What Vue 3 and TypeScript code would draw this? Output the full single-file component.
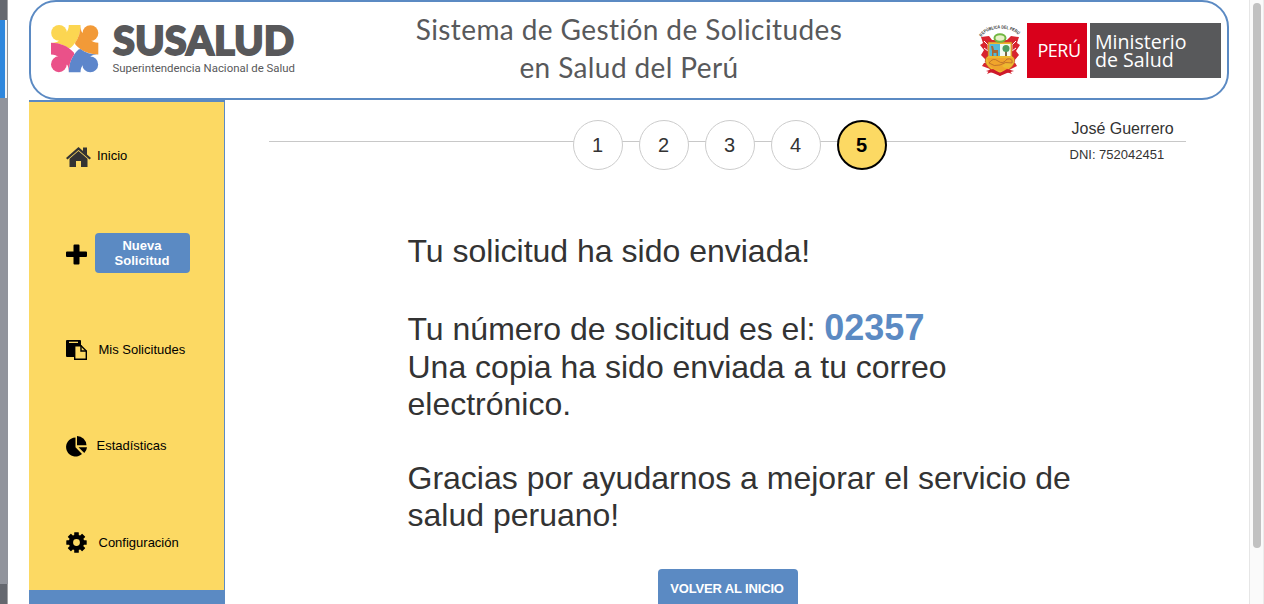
<script setup lang="ts">
interface NavItem {
  label: string
  icon: 'home' | 'plus' | 'paste' | 'pie' | 'gear'
  primary?: boolean
}

const navItems: NavItem[] = [
  { label: 'Inicio', icon: 'home' },
  { label: 'Nueva Solicitud', icon: 'plus', primary: true },
  { label: 'Mis Solicitudes', icon: 'paste' },
  { label: 'Estadísticas', icon: 'pie' },
  { label: 'Configuración', icon: 'gear' },
]

const steps: number[] = [1, 2, 3, 4, 5]
const currentStep = 5

const petals = [
  { color: '#fcd651', angle: 0 },
  { color: '#f29a38', angle: 90 },
  { color: '#5d86cb', angle: 180 },
  { color: '#ea5189', angle: 270 },
]
const gearTeeth = [0, 45, 90, 135, 180, 225, 270, 315]
</script>

<template>
  <div class="screen">
    <div class="edge">
      <div class="edge-dark"></div>
      <div class="edge-blue"></div>
      <div class="edge-gray"></div>
      <div class="edge-dark"></div>
    </div>

    <div class="page">
      <header class="header">
        <svg class="susalud" width="250" height="70" viewBox="0 0 250 70">
          <g transform="translate(0 4) scale(.3355)">
            <g v-for="p in petals" :key="p.angle" :fill="p.color" :transform="`rotate(${p.angle} 70.5 70.5)`">
              <circle cx="24" cy="23.500" r="23.500" />
              <path d="M53 0H88C88 28 78 50 59 68L53.700 69.500C38.600 58.600 21 53 0 53C14 53 24 50 24 44L44 24C50 18 53 10 53 0Z" />
            </g>
          </g>
          <text class="brand" x="62" y="34" textLength="181" lengthAdjust="spacingAndGlyphs">SUSALUD</text>
          <text class="brand-sub" x="61.5" y="51.300" textLength="182.500" lengthAdjust="spacingAndGlyphs">Superintendencia Nacional de Salud</text>
        </svg>

        <h1 class="title"><span class="t1">Sistema de Gestión de Solicitudes</span><br><span class="t2">en Salud del Perú</span></h1>

        <div class="gov">
          <svg width="52" height="60" viewBox="0 0 52 60">
            <path id="arc" d="M7.5 17C13 6.500 37 5 45 16" fill="none" />
            <text class="arc-text"><textPath href="#arc" textLength="41" lengthAdjust="spacingAndGlyphs">REPÚBLICA DEL PERÚ</textPath></text>
            <path d="M7 17L15 16L18 20H33L37 16L45 17L43 23L46 25L42 31L45 35L40 41L43 46L35 50L38 54L30 51L26 56L20 51L13 54L16 49L8 46L12 40L7 35L10 30L6 25L9 23Z" fill="#d8242f" />
            <path d="M10 21L14 25V31L10 28M42 21L38 25V31L42 28" fill="none" stroke="#fff" stroke-width="1" />
            <path d="M8 43L14 41V43ZM43 43L38 41V43Z" fill="#fff" />
            <path d="M14 22H38V36Q42 38 40 44Q36 51 26 53Q16 51 12 44Q10 38 14 36Z" fill="#ecba31" stroke="#c25427" stroke-width=".7" />
            <path d="M15.500 24H26V36H15.500Z" fill="#54b9d9" />
            <path d="M26 24H36.500V36H26Z" fill="#f3faf0" />
            <path d="M18 36V31L17 26H19L20 30H24V36H22.500V33H19.500V36Z" fill="#a96734" />
            <path d="M31 29V36H33V29" fill="#7a6843" />
            <circle cx="32" cy="28.500" r="3.500" fill="#4c9c61" />
            <ellipse cx="26" cy="18" rx="5.500" ry="3.800" fill="#e7f1c8" stroke="#72b742" stroke-width="2" />
            <path d="M13 38H39V43Q32 42 28 46Q32 50 37 46Q31 53 22 50Q14 47 14 41Z" fill="#f0a52b" />
            <path d="M15 43Q19 37 24 41T33 39Q39 38 38 43Q31 41 26 45Q20 47 15 43" fill="none" stroke="#b5682a" stroke-width=".8" />
            <path d="M12 51L19 49L26 53L33 49L40 51L33 53L26 56L19 53Z" fill="#ce1a2b" />
          </svg>
          <div class="peru">PERÚ</div>
          <div class="ministry">Ministerio<br>de Salud</div>
        </div>
      </header>

      <div class="body">
        <aside class="sidebar">
          <nav class="nav">
            <a v-for="item in navItems" :key="item.label" class="nav-item" :class="item.icon">
              <svg v-if="item.icon === 'home'" class="icon" width="25" height="21" viewBox="0 0 25 21">
                <path d="M0 11L12.500 0L17 4V.500H21V7.500L25 11L23.500 12.500L12.500 3L1.500 12.500Z" fill="#333" />
                <path d="M3.500 11.800L12.500 4L21.500 11.800V20H15V14H10V20H3.500Z" fill="#333" />
              </svg>
              <svg v-else-if="item.icon === 'plus'" class="icon" width="21" height="21" viewBox="0 0 21 21">
                <path d="M8.500 .5H12.500Q13.500 .5 13.500 1.500V7.500H20Q21 7.500 21 8.500V12Q21 13 20 13H13.500V19.500Q13.500 20.500 12.500 20.500H8.500Q7.500 20.500 7.500 19.500V13H1Q0 13 0 12V8.500Q0 7.500 1 7.500H7.500V1.500Q7.500 .5 8.500 .5Z" />
              </svg>
              <svg v-else-if="item.icon === 'paste'" class="icon" width="21" height="20" viewBox="0 0 21 20">
                <path d="M1 0H14Q15 0 15 1V5H8V17H1Q0 17 0 16V1Q0 0 1 0Z" />
                <path d="M3 1.700H12V3H3Z" fill="#fcd963" />
                <path d="M8.700 5.700H15L20.300 11V19.300H8.700Z" fill="#fcd963" stroke="#000" stroke-width="1.400" />
                <path d="M15 5.500V11H20.500" fill="none" stroke="#000" stroke-width="1.400" />
              </svg>
              <svg v-else-if="item.icon === 'pie'" class="icon" width="22" height="21" viewBox="0 0 22 21">
                <path d="M9.500 1.500V11.300L16 18A9.500 9.500 0 1 1 9.500 1.500Z" />
                <path d="M11 0A9.500 9.500 0 0 1 20.500 9.200H11Z" />
                <path d="M12.500 11.300H21A9 9 0 0 1 18.300 17Z" />
              </svg>
              <svg v-else class="icon" width="21" height="21" viewBox="0 0 21 21">
                <rect v-for="a in gearTeeth" :key="a" x="8.200" y=".3" width="4.600" height="5" rx=".5" :transform="`rotate(${a} 10.500 10.500)`" />
                <circle cx="10.500" cy="10.500" r="5.600" fill="none" stroke="#000" stroke-width="4.400" />
              </svg>
              <span :class="item.primary ? 'nav-button' : 'nav-label'">{{ item.label }}</span>
            </a>
          </nav>
          <div class="sidebar-foot"></div>
        </aside>

        <main class="main">
          <div class="progress">
            <div class="steps">
              <div v-for="s in steps" :key="s" class="step" :class="{ active: s === currentStep }">{{ s }}</div>
            </div>
            <div class="user">
              <div class="user-name">José Guerrero</div>
              <div class="user-id">DNI: 752042451</div>
            </div>
          </div>

          <section class="message">
            <p class="m1">Tu solicitud ha sido enviada!</p>
            <p class="m2">Tu número de solicitud es el: <strong>02357</strong><br>Una copia ha sido enviada a tu correo electrónico.</p>
            <p class="m3">Gracias por ayudarnos a mejorar el servicio de salud peruano!</p>
          </section>

          <button class="back" type="button">VOLVER AL INICIO</button>
        </main>
      </div>
    </div>

    <div class="scrollbar"><div class="thumb"></div></div>
  </div>
</template>

<style>
html,
body {
  overflow: hidden;
}
</style>

<style scoped>
.screen {
  width: 1264px;
  height: 604px;
  overflow: hidden;
  display: flex;
  background: #fff;
  font-family: 'Liberation Sans', Arial, sans-serif;
  color: #333;
}
.edge {
  width: 8px;
  display: flex;
  flex-direction: column;
}
.edge-dark {
  height: 20px;
  background: #65686f;
  border-right: 1px solid #a2a2a5;
}
.edge-blue {
  height: 78px;
  background: linear-gradient(90deg, #2f87dd 5px, #f3f5f7 5px);
  border-right: 1px solid #929295;
}
.edge-gray {
  flex: 1;
  background: #91949c;
}
.page {
  width: 1200px;
  margin-left: 21px;
  display: flex;
  flex-direction: column;
}
.header {
  box-sizing: border-box;
  height: 100px;
  flex: none;
  border: 2px solid #5b8ac3;
  border-radius: 27px;
  display: flex;
  align-items: flex-start;
  padding: 0 6px 0 20px;
}
.susalud {
  margin-top: 19px;
  overflow: visible;
}
.brand {
  font: 900 40px Lato, sans-serif;
  fill: #58585a;
  stroke: #58585a;
  stroke-width: 1.800px;
}
.brand-sub {
  font: 11.500px Roboto, sans-serif;
  fill: #58585a;
}
.title {
  margin: 9px 0 0 98px;
  width: 460px;
  text-align: center;
  font: 400 28px/37.500px Lato, sans-serif;
  font-variant-ligatures: none;
  letter-spacing: 0.400px;
  color: #58595b;
  white-space: nowrap;
}
.gov {
  display: flex;
  align-items: flex-start;
  margin: 21px 0 0 auto;
}
.gov svg {
  margin: -3px 1px 0 0;
}
.arc-text {
  font: 700 4.500px 'Liberation Sans', sans-serif;
  fill: #333;
}
.peru {
  width: 60px;
  height: 55px;
  background: #d9001b;
  color: #fff;
  font: 18px/54px 'Open Sans', sans-serif;
  letter-spacing: -0.500px;
  text-align: center;
  box-sizing: border-box;
  padding-left: 4px;
}
.ministry {
  box-sizing: border-box;
  width: 131px;
  height: 55px;
  margin-left: 3px;
  padding: 10px 0 0 5px;
  background: #58595b;
  color: #fff;
  font: 19.600px/18px 'Open Sans', sans-serif;
}
.body {
  flex: 1;
  display: flex;
}
.sidebar {
  box-sizing: border-box;
  width: 196px;
  height: 504px;
  border-top: 2px solid #5b8ac3;
  border-right: 1px solid #5b8ac3;
  background: #fcd963;
  display: flex;
  flex-direction: column;
}
.nav {
  height: 488px;
  box-sizing: border-box;
  padding: 6px 0 0 37px;
}
.nav-item {
  height: 96.500px;
  display: flex;
  align-items: center;
  font-size: 13px;
  color: #000;
}
.icon {
  flex: none;
}
.home .icon {
  margin: 3px 6px 0 0;
}
.home .nav-label {
  margin-bottom: 2px;
}
.plus .icon {
  margin: 3px 8px 0 0;
}
.paste .icon {
  margin: 1px 11.500px 0 0;
}
.pie .icon {
  margin: 1px 8.500px 0 0;
}
.gear .icon {
  margin: 1px 11.500px 0 0;
}
.nav-button {
  box-sizing: border-box;
  width: 95px;
  height: 40px;
  padding: 5px 16px 0 15px;
  border-radius: 4px;
  background: #5b8ac3;
  color: #fff;
  font-weight: 700;
  line-height: 15px;
  text-align: center;
}
.sidebar-foot {
  flex: 1;
  margin-right: -1px;
  background: #5b8ac3;
}
.main {
  width: 1004px;
  display: flex;
  flex-direction: column;
}
.progress {
  width: 917px;
  height: 70px;
  box-sizing: border-box;
  margin-left: 44px;
  padding: 20px 0 0 304px;
  display: flex;
  background: linear-gradient(#c8c8c8, #c8c8c8) 0 41px / 917px 1px no-repeat;
}
.steps {
  display: flex;
  gap: 16px;
}
.step {
  box-sizing: border-box;
  width: 50px;
  height: 50px;
  padding-right: 1px;
  border: 1px solid #ccc;
  border-radius: 50%;
  background: #fff;
  font-size: 20px;
  line-height: 48px;
  text-align: center;
}
.step.active {
  border: 2px solid #000;
  background: #fcd963;
  color: #000;
  font-weight: 700;
  line-height: 46px;
}
.user {
  margin-left: 183px;
  white-space: nowrap;
}
.user-name {
  margin-left: 1.500px;
  font-size: 16px;
  line-height: 18px;
}
.user-id {
  font-size: 13px;
  line-height: 15px;
  margin: 9px 0 0 -0.500px;
}
.message {
  margin: 63px 0 0 182.500px;
  width: 680px;
  font-size: 32px;
  line-height: 37.400px;
}
.message p {
  margin: 0;
}
.message .m2 {
  margin-top: 39.800px;
}
.message .m3 {
  margin-top: 36.200px;
}
.message strong {
  font-size: 36px;
  line-height: 36px;
  color: #5b8ac3;
}
.back {
  width: 140px;
  height: 40px;
  flex: none;
  margin: 35px 0 0 433px;
  border: 0;
  border-radius: 4px;
  background: #5b8ac3;
  color: #fff;
  font: 700 13px/38px 'Liberation Sans', sans-serif;
  letter-spacing: -0.150px;
  padding: 0 2px 0 0;
  white-space: nowrap;
}
.scrollbar {
  box-sizing: border-box;
  width: 15px;
  margin-left: 20px;
  padding: 3px 0 0 3px;
  background: #fafafa;
  border-left: 1px solid #e6e6e6;
  border-right: 1px solid #ececec;
}
.thumb {
  width: 8px;
  height: 545px;
  border-radius: 4px;
  background: #c1c1c1;
}
</style>
